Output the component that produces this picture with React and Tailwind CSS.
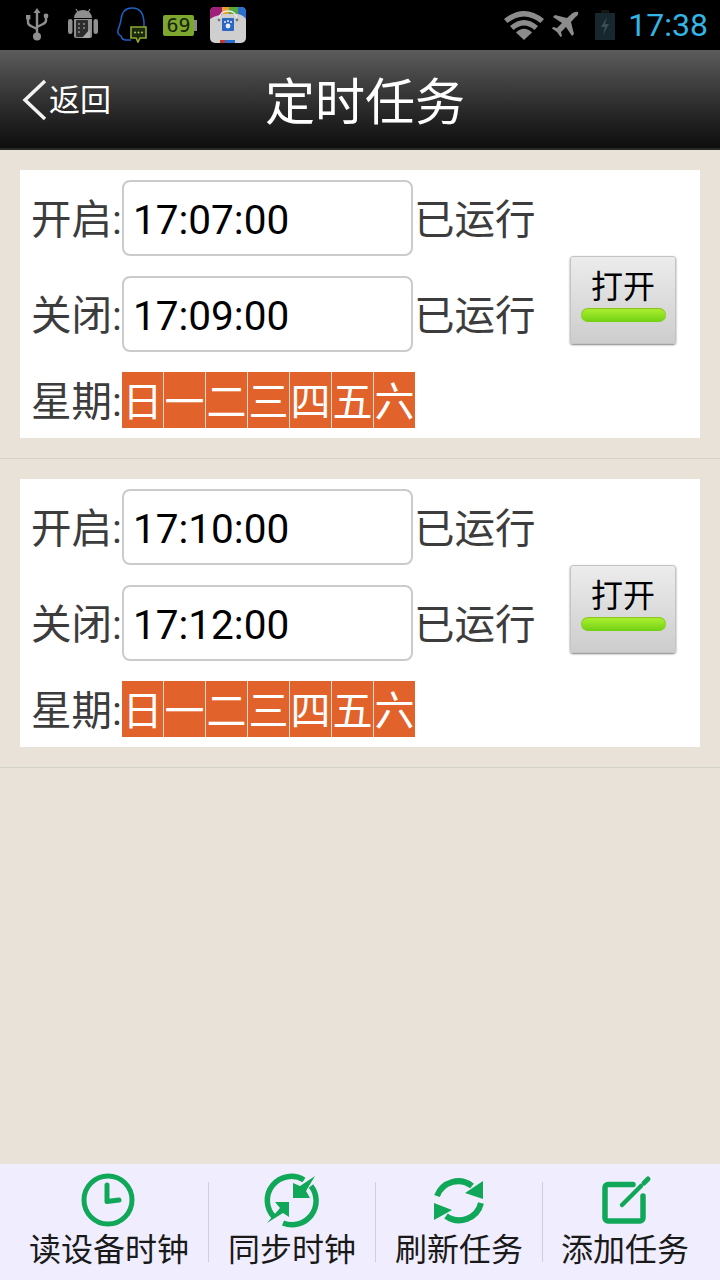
import React from 'react';

const FONT = 'font-[Roboto,"Noto_Sans_CJK_SC",sans-serif]';
const WEEK = ['日', '一', '二', '三', '四', '五', '六'];
const TASKS = [
  { start: '17:07:00', stop: '17:09:00' },
  { start: '17:10:00', stop: '17:12:00' },
];

const UsbIcon = () => (
  <svg width="24" height="34" viewBox="0 0 24 34" className="ml-[25px]">
    <g fill="none" stroke="#8f8f8f" strokeWidth="2.400">
      <path d="M12 4V25" />
      <path d="M3 10v4q0 3 3 4l6 3" />
      <path d="M21 9v3q0 3-3 4l-6 3" />
    </g>
    <path d="M12 0l3.500 5h-7z" fill="#8f8f8f" />
    <rect x="1" y="7" width="4.400" height="4.400" fill="#8f8f8f" />
    <circle cx="21" cy="8" r="2.400" fill="#8f8f8f" />
    <circle cx="12" cy="28.500" r="4" fill="#8f8f8f" />
  </svg>
);

const AndroidIcon = () => (
  <svg width="32" height="36" viewBox="0 0 32 36" className="ml-[18px]">
    <path d="M7 11a9 8 0 0 1 18 0z" fill="#8f8f8f" />
    <path d="M9 2l2.500 4M23 2l-2.500 4" stroke="#8f8f8f" strokeWidth="1.200" />
    <rect x="1" y="12" width="4.500" height="15" rx="2.200" fill="#8f8f8f" />
    <rect x="26.500" y="12" width="4.500" height="15" rx="2.200" fill="#8f8f8f" />
    <path d="M7 12h18v17q0 2-2 2H9q-2 0-2-2z" fill="#8f8f8f" />
    <rect x="9" y="13" width="12" height="17" rx="1" fill="#2d2d2d" />
    <path d="M15 31l8-9v7q0 2-2 2z" fill="#a8a8a8" />
    <g fill="#9a9a9a">
      <circle cx="12" cy="17" r="0.900" /><circle cx="17" cy="17" r="0.900" />
      <circle cx="12" cy="21" r="0.900" /><circle cx="17" cy="21" r="0.900" />
      <circle cx="12" cy="25" r="0.900" />
    </g>
  </svg>
);

const QQIcon = () => (
  <svg width="32" height="36" viewBox="0 0 32 36" className="ml-[17px]">
    <path d="M28 20Q29 1 16 1 6 1 5 13 4 18 2 23 1 27 5 29 6 33 10 33H15" fill="none" stroke="#1a62c4" strokeWidth="1.500" />
    <path d="M15 20h15v11H24l-2 4-2-4h-5z" fill="#1a2a10" stroke="#93a82e" strokeWidth="1.600" />
    <g fill="#b5c940">
      <circle cx="19" cy="25.500" r="1" /><circle cx="22.500" cy="25.500" r="1" /><circle cx="26" cy="25.500" r="1" />
    </g>
  </svg>
);

const SegmentBattery = () => (
  <div className="ml-[15px] flex items-center">
    <div className="flex h-[21px] w-[31px] items-center justify-center rounded-[2px] bg-[#7da72e] font-['DejaVu_Sans_Mono'] text-[20px] leading-none text-[#16240a]">
      69
    </div>
    <div className="h-[11px] w-[3px] bg-[#8a8a8a]" />
  </div>
);

const BagIcon = () => (
  <svg width="36" height="36" viewBox="0 0 36 36" className="ml-[13px]">
    <rect width="36" height="36" rx="5" fill="#cfcfcf" />
    <path d="M0 12V5q0-5 5-5h7v8q-6 0-12 4z" fill="#a01f78" />
    <path d="M12 0h7v7h-7z" fill="#d33d2f" />
    <path d="M12 0h12v7H12z" fill="#e8a02a" />
    <path d="M19 0h9v7h-9z" fill="#57a93b" />
    <path d="M28 0h3q5 0 5 5v7q-3-4-8-5z" fill="#2a6fd0" />
    <path d="M9 12Q10 4 18 4t9 8" fill="none" stroke="#e9e9e9" strokeWidth="1.400" />
    <circle cx="9" cy="13" r="1.400" fill="#777" />
    <circle cx="27" cy="13" r="1.400" fill="#777" />
    <rect x="12" y="11" width="12" height="13" rx="1" fill="#2c66c4" />
    <circle cx="18" cy="19" r="2.400" fill="#e8eef9" />
    <g fill="#e8eef9">
      <circle cx="15" cy="15" r="1" /><circle cx="18" cy="14" r="1" /><circle cx="21" cy="15" r="1" />
    </g>
    <rect x="10" y="33" width="5" height="3" fill="#c8352d" />
    <rect x="15" y="33" width="5" height="3" fill="#2a6fd0" />
    <rect x="20" y="33" width="5" height="3" fill="#2a6fd0" />
  </svg>
);

const WifiIcon = () => (
  <svg width="40" height="30" viewBox="0 0 40 30">
    <g fill="#8c8c8c">
      <path d="M0 9Q20-7 40 9l-3.500 4Q20 0 3.500 13z" />
      <path d="M6 16Q20 4 34 16l-3.500 4Q20 11 9.500 20z" />
      <path d="M12 22.500Q20 15 28 22.500L20 30z" />
    </g>
  </svg>
);

const PlaneIcon = () => (
  <svg width="28" height="28" viewBox="0 0 28 28" className="ml-[7px]">
    <path d="M27 1q-3-1-6 1.500L16 7 4 4 2 6l9 6-5 5-4-1-1 1.500 5 3.500 3.500 5 1.500-1-1-4 5-5 6 9 2-2-3-12 4.500-5Q28 4 27 1z" fill="#8c8c8c" />
  </svg>
);

const DimBattery = () => (
  <svg width="20" height="30" viewBox="0 0 20 30" className="ml-[16px]">
    <rect x="6" y="0" width="8" height="3" fill="#161616" />
    <rect x="0" y="3" width="20" height="27" fill="#16282e" />
    <path d="M12 7l-6 10h4l-2 8 6-11h-4z" fill="#3c4e54" />
  </svg>
);

const ClockIcon = () => (
  <svg width="56" height="56" viewBox="0 0 56 56">
    <circle cx="27" cy="28" r="24" fill="none" stroke="#10a858" strokeWidth="5" />
    <path d="M26 13V29.500L38 28" fill="none" stroke="#10a858" strokeWidth="5" strokeLinecap="round" strokeLinejoin="round" />
  </svg>
);

const SyncIcon = () => (
  <svg width="56" height="56" viewBox="0 0 56 56">
    <g fill="none" stroke="#10a858" strokeWidth="5.500">
      <path d="M10 45A24 24 0 0 1 40 8" />
      <path d="M47 14A24 24 0 0 1 19 51" />
    </g>
    <g fill="#10a858">
      <path d="M29 26V11L36 14 51 4 42 19 46 26z" />
      <path d="M25 30H11L16 36 3 51 19 41 25 45z" />
    </g>
  </svg>
);

const RefreshIcon = () => (
  <svg width="56" height="56" viewBox="0 0 56 56">
    <g fill="none" stroke="#10a858" strokeWidth="6">
      <path d="M6 24A22.500 22.500 0 0 1 41 14" />
      <path d="M50 31A22.500 22.500 0 0 1 15 44" />
    </g>
    <g fill="#10a858">
      <path d="M52 9V27L34 21z" />
      <path d="M3 31V48L21 38z" />
    </g>
  </svg>
);

const EditIcon = () => (
  <svg width="56" height="56" viewBox="0 0 56 56">
    <path d="M36 12.500H11a3 3 0 0 0-3 3V46a3 3 0 0 0 3 3H43a3 3 0 0 0 3-3V24" fill="none" stroke="#10a858" strokeWidth="5.500" strokeLinecap="round" />
    <path d="M25 33L44 14" fill="none" stroke="#10a858" strokeWidth="4.500" strokeLinecap="round" />
    <path d="M47 11L51 7" fill="none" stroke="#10a858" strokeWidth="5" strokeLinecap="round" />
  </svg>
);

const TimeRow = ({ label, value }) => (
  <div className="flex h-[76px] items-center">
    <span className="w-[91px] whitespace-nowrap pt-[5px] text-[40.500px] leading-none text-[#3c3c3c]">{label}:</span>
    <div className="flex h-[76px] w-[291px] items-center rounded-lg border-2 border-[#cbcbcb] bg-white pl-[9px] pt-[5px] text-[40.500px] leading-none text-black">
      {value}
    </div>
    <span className="ml-[1px] whitespace-nowrap pt-[5px] text-[40.500px] leading-none text-[#3c3c3c]">已运行</span>
  </div>
);

const TaskItem = ({ task }) => (
  <div className="border-b border-[#d3d3c4] py-5">
    <div className="mx-5 flex items-center bg-white py-[10px] pl-[11px]">
      <div className="flex w-[539px] flex-col gap-5">
        <TimeRow label="开启" value={task.start} />
        <TimeRow label="关闭" value={task.stop} />
        <div className="flex h-[56px] items-center">
          <span className="w-[91px] whitespace-nowrap pt-[5px] text-[40.500px] leading-none text-[#3c3c3c]">星期:</span>
          <div className="flex h-[56px]">
            {WEEK.map((day, i) => (
              <div
                key={day}
                className={`flex h-[56px] items-center justify-center bg-[#e2622b] pt-[5px] text-[40px] leading-none text-white ${i < 6 ? 'w-[42px] border-r border-[#f0d9cc]' : 'w-[41px]'}`}
              >
                {day}
              </div>
            ))}
          </div>
        </div>
      </div>
      <div className="mb-2 flex h-[88px] w-[106px] flex-col items-center rounded-[3px] border border-[#c4c4c4] bg-gradient-to-b from-[#ececec] to-[#cdcdcd] shadow-[0_1px_2px_rgba(0,0,0,0.5)]">
        <span className="mt-[11px] text-[32px] leading-[38px] text-black">打开</span>
        <div className="mt-[2px] h-[14px] w-[85px] rounded-lg bg-gradient-to-b from-[#b0f232] to-[#70d010] shadow-[inset_0_1px_1px_rgba(80,120,0,0.4)]" />
      </div>
    </div>
  </div>
);

const ToolItem = ({ icon, label, className }) => (
  <div className={`flex h-full flex-col items-center pt-[8px] ${className}`}>
    {icon}
    <span className="mt-[3px] whitespace-nowrap text-[32px] leading-[38px] text-[#1a1a1a]">{label}</span>
  </div>
);

const Divider = () => <div className="h-[80px] w-px shrink-0 bg-[#cfcfd6]" />;

export default function App() {
  return (
    <div className={`flex h-[1280px] w-[720px] flex-col overflow-hidden bg-[#e8e2d8] ${FONT}`}>
      {/* status bar */}
      <div className="flex h-[50px] shrink-0 items-center bg-black">
        <UsbIcon />
        <AndroidIcon />
        <QQIcon />
        <SegmentBattery />
        <BagIcon />
        <div className="ml-auto flex items-center pr-3">
          <WifiIcon />
          <PlaneIcon />
          <DimBattery />
          <span className="ml-[13px] text-[32px] leading-none text-[#33b5e5]">17:38</span>
        </div>
      </div>

      {/* header */}
      <div className="relative flex h-[100px] shrink-0 items-center justify-center border-b-2 border-[#2a2a28] bg-gradient-to-b from-[#5c5c5c] to-[#0e0e0e]">
        <div className="absolute left-[21px] top-[29px] flex items-center">
          <svg width="26" height="42" viewBox="0 0 26 42">
            <path d="M24 2L4 21l20 19" fill="none" stroke="#f2f2f2" strokeWidth="3.500" />
          </svg>
          <span className="ml-[2px] text-[31px] leading-none text-white">返回</span>
        </div>
        <span className="ml-[10px] pt-[8px] text-[50px] leading-none text-white">定时任务</span>
      </div>

      {/* task list */}
      <div className="flex-1">
        {TASKS.map(task => (
          <TaskItem key={task.start} task={task} />
        ))}
      </div>

      {/* bottom tool bar */}
      <div className="flex h-[116px] shrink-0 items-center bg-[#f0eefe]">
        <ToolItem icon={<ClockIcon />} label="读设备时钟" className="w-[208px] pl-[10px]" />
        <Divider />
        <ToolItem icon={<SyncIcon />} label="同步时钟" className="w-[166px]" />
        <Divider />
        <ToolItem icon={<RefreshIcon />} label="刷新任务" className="w-[166px]" />
        <Divider />
        <ToolItem icon={<EditIcon />} label="添加任务" className="flex-1 pr-[13px]" />
      </div>
    </div>
  );
}
